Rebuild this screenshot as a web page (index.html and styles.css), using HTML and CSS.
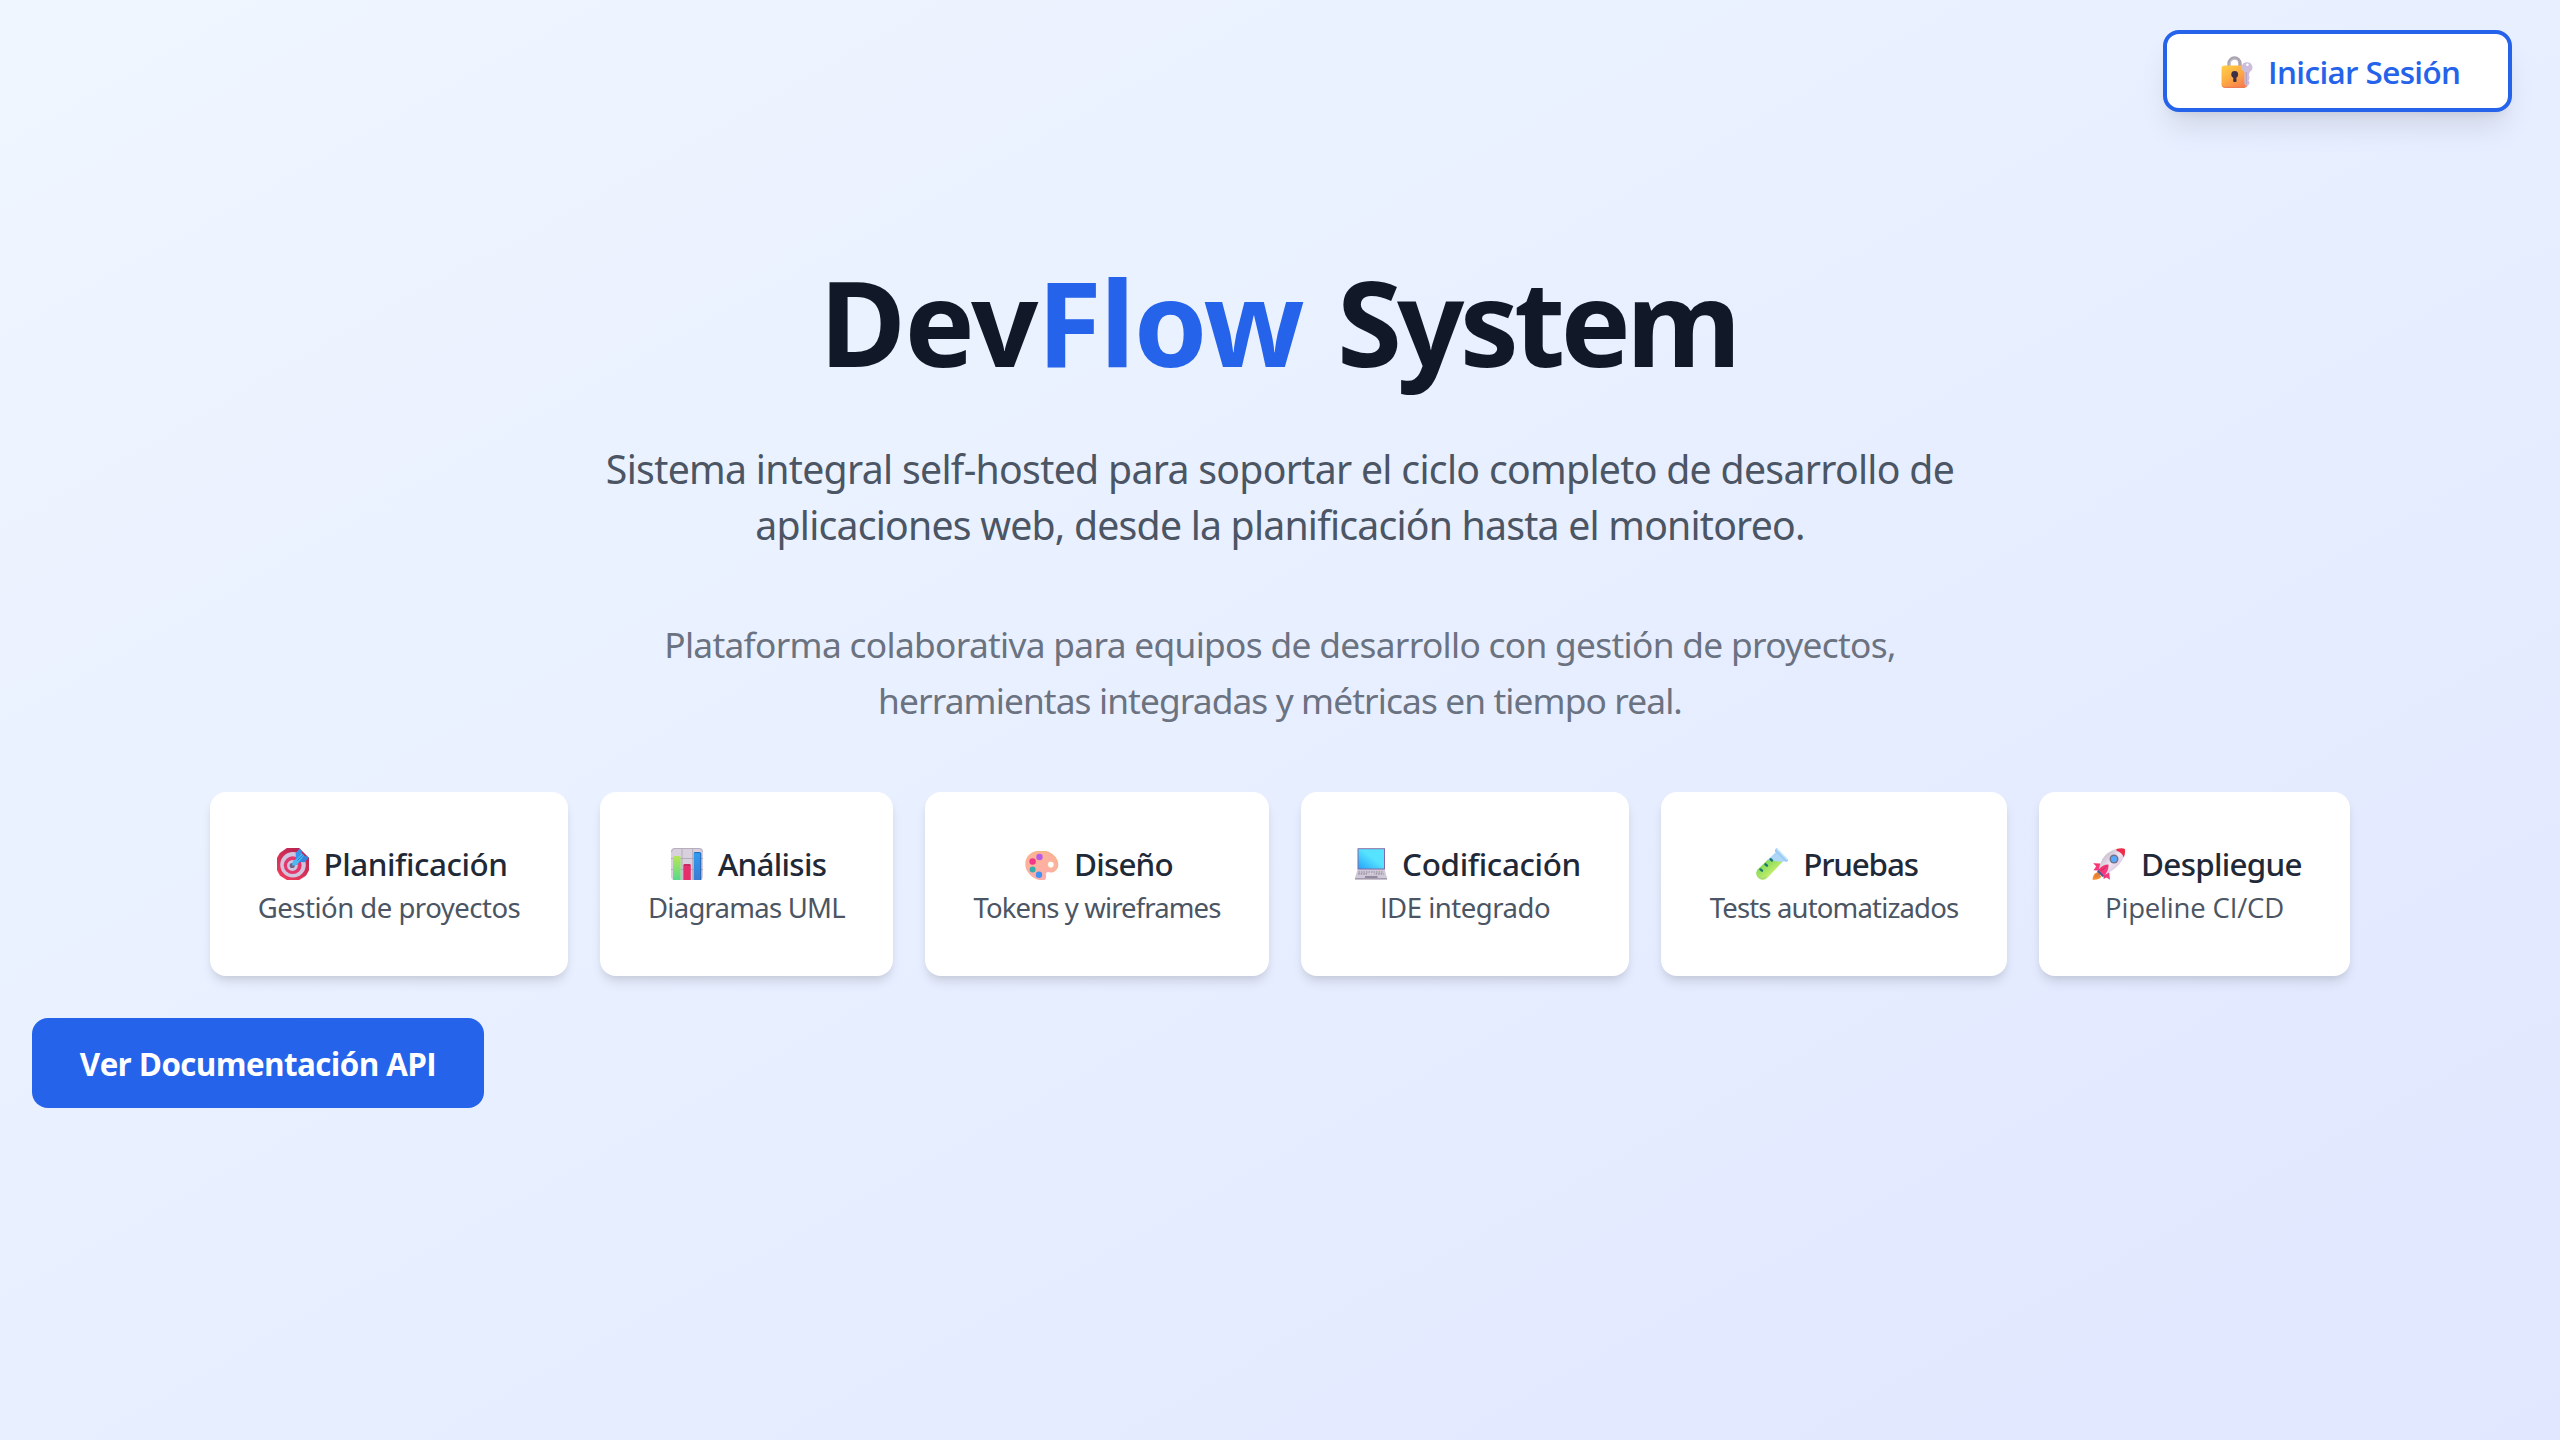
FILE: index.html
```html
<!DOCTYPE html>
<html lang="es">
<head>
<meta charset="utf-8">
<title>DevFlow System</title>
<link rel="stylesheet" href="styles.css">
</head>
<body>
<div class="page">
  <header class="topbar">
    <a class="login">
      <svg class="icon" viewBox="0 0 32 32">
        <defs>
          <linearGradient id="lockBody" x1="0" y1="0" x2=".7" y2="1"><stop offset="0" stop-color="#ffd04a"/><stop offset=".5" stop-color="#fdaf42"/><stop offset="1" stop-color="#f8804e"/></linearGradient>
        </defs>
        <path d="M8 11V7.5a5.5 5.5 0 0 1 11 0V11" fill="none" stroke="#aaa3b0" stroke-width="3.4"/>
        <path d="M9 10V7.5a4.5 4.5 0 0 1 8.5-2" fill="none" stroke="#cfc9d4" stroke-width="1"/>
        <rect x="0.5" y="9.5" width="26" height="22" rx="3" fill="url(#lockBody)"/>
        <path d="M1.5 30.2q1 1.2 2.6 1.2h20" fill="none" stroke="#e8754a" stroke-width="1"/>
        <circle cx="13.7" cy="18.5" r="3.4" fill="#3d3148"/>
        <path d="M12.6 19h2.5l.5 6.2q-1.8 1.8-3.5 0z" fill="#3d3148"/>
        <path d="M26 6.2a5.3 5.3 0 0 0-2.6 10v11.9q1.6 2.3 3.6 1.5l1.4-1.5v-2.6l-1-1.1 1-1.2v-3l-.6-1 .8-3A5.3 5.3 0 0 0 26 6.2z" fill="#cbbddb"/>
        <path d="M25.3 16v12.6" stroke="#b3a2c8" stroke-width="1.2"/>
        <circle cx="26.4" cy="8.7" r="1.3" fill="#fff"/>
      </svg>
      <span class="login-text">Iniciar Sesión</span>
    </a>
  </header>

  <main class="hero">
    <h1 class="title"><span class="dev">Dev</span><span class="flow">Flow</span><span class="system">System</span></h1>
    <p class="lead"><span class="lead-a">Sistema integral self-hosted para soportar el ciclo completo de desarrollo de</span><br><span class="lead-b">aplicaciones web, desde la planificación hasta el monitoreo.</span></p>
    <p class="sublead"><span class="sublead-a">Plataforma colaborativa para equipos de desarrollo con gestión de proyectos,</span><br><span class="sublead-b">herramientas integradas y métricas en tiempo real.</span></p>
  </main>

  <section class="features">
    <article class="card planning">
      <h2>
        <svg class="icon" viewBox="0 0 32 32">
          <defs><linearGradient id="ring" x1=".8" y1="0" x2=".2" y2="1"><stop offset="0" stop-color="#b52350"/><stop offset="1" stop-color="#f03c5c"/></linearGradient></defs>
          <path d="M10 0h12l10 10v12l-3 5.500-7 4.500H10l-7-4.500-3-5.500V10l3-5z" fill="url(#ring)" stroke="url(#ring)" stroke-linejoin="round" stroke-width=".3"/>
          <circle cx="16" cy="16.800" r="12.800" fill="#d1c4df"/>
          <circle cx="15.700" cy="17.200" r="8.900" fill="#e2386b"/>
          <circle cx="15.400" cy="17.500" r="5.400" fill="#d1c4df"/>
          <circle cx="15.200" cy="17.500" r="2.600" fill="#746481"/>
          <path d="M15.500 17.500q-.5-4.500 3.500-6.500L18.600 5 23 .300l2.300 5.200L22 10z" fill="#3796ec"/>
          <path d="M15.500 17.500q5 .500 6.500-3.500l5.500.2L32 9.300l-5.500-2L22 10z" fill="#3187de"/>
          <path d="M15.300 17.500q-.5-5.300 4.200-6.200L25 5.500l2 2-5 6.500q-1.700 3.800-6.700 3.500z" fill="#50b9f2"/>
          <path d="M20.500 12.500l5.800-6" stroke="#2275cf" stroke-width="1"/>
        </svg>
        <span>Planificación</span>
      </h2>
      <p>Gestión de proyectos</p>
    </article>

    <article class="card analysis">
      <h2>
        <svg class="icon" viewBox="0 0 32 32">
          <defs>
            <linearGradient id="barG" x1="0" y1="0" x2="0" y2="1"><stop offset="0" stop-color="#b5e655"/><stop offset="1" stop-color="#58d98b"/></linearGradient>
            <linearGradient id="barB" x1="0" y1="0" x2="0" y2="1"><stop offset="0" stop-color="#2f9df2"/><stop offset="1" stop-color="#3c7bd2"/></linearGradient>
          </defs>
          <rect width="32" height="32" rx="3.500" fill="#d8d1dd"/>
          <path d="M11 0v32M21.700 0v32M0 10.500h32M0 21.500h32" stroke="#b4abba" stroke-width="1"/>
          <path d="M.5 4Q.5.500 4 .500h24q3.500 0 3.500 3.500" fill="none" stroke="#b7aebc" stroke-width="1"/>
          <path d="M2 32V9.500Q2 8 3.500 8H8q1.600 0 1.600 1.500V32z" fill="url(#barG)"/>
          <path d="M12.300 32V17.500q0-1.500 1.500-1.500h4.500q1.500 0 1.500 1.500V32z" fill="#e52e6c"/>
          <path d="M12.800 17h6.500" stroke="#b62762" stroke-width="1.300"/>
          <path d="M22.700 32V5.500q0-1.500 1.500-1.500h4.500q1.500 0 1.500 1.500V32z" fill="url(#barB)"/>
          <path d="M29.700 5v27M23.300 4.600h6" stroke="#2668b4" stroke-width="1"/>
        </svg>
        <span>Análisis</span>
      </h2>
      <p>Diagramas UML</p>
    </article>

    <article class="card design">
      <h2>
        <svg class="icon wide" viewBox="-1 0 34 32">
          <defs><linearGradient id="pal" x1="0" y1="0" x2=".3" y2="1"><stop offset="0" stop-color="#fcb391"/><stop offset="1" stop-color="#fdaeab"/></linearGradient></defs>
          <path d="M11 3h8.500Q28 4.500 31.500 12.500c1.800 4.300.7 8.700-3.500 11.300q-2.800 1.400-5.500.2-2.800-.2-2.500 2.500.9 5.700-3.300 5.900C9 32.500-.5 25.500-.7 16.500-.8 9 4 4 11 3z" fill="url(#pal)"/>
          <path d="M10.500 3.500h9.300c8 2 13 9.500 11.500 15-.7 3-3 5-5.300 5.400" fill="none" stroke="#f4b684" stroke-width="1"/>
          <circle cx="24.800" cy="16.600" r="3.600" fill="#f8c28d"/><circle cx="24.800" cy="16.600" r="2.800" fill="#fff"/>
          <circle cx="13.500" cy="9" r="3.200" fill="#b65be5"/>
          <circle cx="6.600" cy="13.500" r="3.200" fill="#f43786"/>
          <circle cx="6.600" cy="21.500" r="3" fill="#35aeb0"/>
          <circle cx="13" cy="26.700" r="3.200" fill="#4292f4"/>
        </svg>
        <span>Diseño</span>
      </h2>
      <p>Tokens y wireframes</p>
    </article>

    <article class="card coding">
      <h2>
        <svg class="icon" viewBox="0 0 32 32">
          <defs><linearGradient id="scr" x1="1" y1="0" x2="0" y2="1"><stop offset=".45" stop-color="#55e3ff"/><stop offset="1" stop-color="#27a4f8"/></linearGradient></defs>
          <rect x="2.500" y="0" width="27.500" height="22" rx="1" fill="#8069a9"/>
          <rect x="3.500" y="1.200" width="25.500" height="19.300" fill="url(#scr)"/>
          <path d="M3 .5h26.500" stroke="#9b8ab4" stroke-width="1"/>
          <path d="M2.500 21.500h27.200L32 30H0z" fill="#cfc8d7"/>
          <path d="M3.500 24h25M3.200 25.800h25.600" stroke="#8f8698" stroke-width="1.200" stroke-dasharray="1.500 1"/>
          <path d="M12.500 25.900h7" stroke="#e6e0eb" stroke-width="1"/>
          <path d="M10 28h12.500v2H10z" fill="#94899e"/>
          <path d="M0 30h32v1.600H0z" fill="#a59baf"/>
        </svg>
        <span>Codificación</span>
      </h2>
      <p><span class="cap-i">I</span>DE integrado</p>
    </article>

    <article class="card testing">
      <h2>
        <svg class="icon" viewBox="0 0 32 32">
          <defs><linearGradient id="liq" x1="0" y1="0" x2="1" y2="1"><stop offset=".2" stop-color="#7fd65c"/><stop offset=".6" stop-color="#bcec68"/></linearGradient></defs>
          <path d="M12 11.500L1.800 21.300c-2.200 2.500-2.100 5.800.3 8.500 2.700 2.800 6.300 2.700 9 .2L26.800 13.500z" fill="url(#liq)"/>
          <path d="M3 29c2.300 2 5 1.800 7-.2" fill="none" stroke="#9bc99a" stroke-width="1"/>
          <path d="M11.500 12l8.500-8 8.500 9-2 1z" fill="#add6f7"/>
          <path d="M20.500 0l12 12-1.500 1.800h-2L19 3.500V1.500z" fill="#9ccbf5"/>
          <path d="M21 1l10.500 11" stroke="#c6e4fc" stroke-width="1.400"/>
          <path d="M14.500 11.200l1.500 1.300M9.500 16.300l1.500 1.300M4.500 21.400l1.500 1.300" stroke="#19786a" stroke-width="2.400" stroke-linecap="round"/>
        </svg>
        <span>Pruebas</span>
      </h2>
      <p>Tests automatizados</p>
    </article>

    <article class="card deploy">
      <h2>
        <svg class="icon wide" viewBox="0 0 34 32">
          <defs>
            <linearGradient id="hull" x1="0" y1="0" x2="1" y2="1"><stop offset=".2" stop-color="#c5bdc9"/><stop offset=".5" stop-color="#f0e4f2"/><stop offset=".9" stop-color="#cbb3d2"/></linearGradient>
            <linearGradient id="fin" x1="0" y1="0" x2="1" y2="1"><stop offset="0" stop-color="#f72c55"/><stop offset="1" stop-color="#f5429a"/></linearGradient>
          </defs>
          <path d="M5 24.500Q1 25.500.5 31.700q6.500.5 9-3.200z" fill="#f78c31"/>
          <path d="M6 24q-3.500 1.500-3.500 5.500 4 0 6-2.500z" fill="#e0803c"/>
          <path d="M8.500 15.500L1.200 15.200l3 3-2.700 4 6 .5z" fill="url(#fin)"/>
          <path d="M17 22.500l1 9.300-3.500-2.300-3 1.500.5-6z" fill="url(#fin)"/>
          <path d="M5 23.800l6 5.500 1.500-2-5.700-5.600z" fill="#4d5690"/>
          <path d="M7 22C7.500 12 15 2.500 25.500.8q5.500-.5 7.300.5c.7 8-4 17.500-20.800 26z" fill="url(#hull)"/>
          <path d="M24.500 1q6-1.500 8.300 0 .8 4-.9 8.500Q30 4.500 24.500 2.800z" fill="#ef2c48"/>
          <circle cx="22" cy="11" r="4.500" fill="#76718a"/><circle cx="22" cy="11" r="3.100" fill="#55a8fb"/>
          <path d="M6.500 21.700q4.500-5.500 10-5.200.8 5.500-4.500 11.500z" fill="url(#fin)"/>
          <path d="M8.500 22.500q4-1.500 7-5" fill="none" stroke="#c72a6e" stroke-width="1"/>
        </svg>
        <span>Despliegue</span>
      </h2>
      <p>Pipeline CI/CD</p>
    </article>
  </section>

  <div class="actions"><a class="docs">Ver Documentación API</a></div>
</div>
</body>
</html>
```
FILE: styles.css
```css
* { box-sizing: border-box; }

body {
  margin: 0;
  font-family: "Noto Sans", "Open Sans", sans-serif;
}

h1, h2, p { margin: 0; }

.page {
  min-height: 1440px;
  padding: 30px 32px 0;
  background: linear-gradient(to bottom right, #eff6ff, #e0e7ff);
}

.topbar {
  display: flex;
  justify-content: flex-end;
  padding-right: 16px;
}

.login {
  display: flex;
  align-items: center;
  gap: 9px;
  width: 349px;
  height: 82px;
  padding: 2px 0 0 48px;
  border: 4px solid #2563eb;
  border-radius: 16px;
  background: #fff;
  color: #2563eb;
  box-shadow: 0 20px 30px -6px rgba(0, 0, 0, .1), 0 8px 12px -8px rgba(0, 0, 0, .1);
}

.login-text {
  font: 600 31.4px/48px "Open Sans", sans-serif;
  letter-spacing: -.62px;
}

.icon {
  flex: none;
  width: 44px;
  height: 32px;
  padding: 0 6px;
}

.icon.wide { width: 46px; }

.hero { text-align: center; }

.title {
  display: flex;
  justify-content: center;
  margin-top: 150px;
  padding-right: 4px;
  font-size: 118px;
  font-weight: 700;
  line-height: 120px;
  color: #111827;
}

.dev { letter-spacing: -1.5px; }
.flow { letter-spacing: -1.6px; color: #2563eb; }
.system { margin-left: 34px; letter-spacing: -4.8px; }

.lead {
  margin-top: 59px;
  font-size: 39.2px;
  line-height: 56px;
  color: #4b5563;
}

.lead-a { letter-spacing: -.69px; }
.lead-b { letter-spacing: -.78px; }

.sublead {
  margin-top: 63px;
  font-size: 35.3px;
  line-height: 56px;
  color: #6b7280;
}

.sublead-a { letter-spacing: -.685px; }
.sublead-b { letter-spacing: -.89px; }

.features {
  display: flex;
  justify-content: center;
  gap: 32px;
  margin-top: 64px;
}

.card {
  height: 184px;
  padding: 48px 0;
  border-radius: 16px;
  background: #fff;
  text-align: center;
  white-space: nowrap;
  box-shadow: 0 8px 12px -2px rgba(0, 0, 0, .1), 0 4px 8px -4px rgba(0, 0, 0, .1);
}

.card h2 {
  display: flex;
  align-items: center;
  justify-content: center;
  gap: 9px;
  font-size: 31.4px;
  font-weight: 500;
  line-height: 48px;
  color: #1f2937;
}

.card p {
  font-size: 27.5px;
  line-height: 39px;
  color: #4b5563;
}

.cap-i { font-family: "Open Sans", sans-serif; }

.planning { width: 358px; }
.planning h2 { letter-spacing: -.44px; }
.planning p { letter-spacing: -.49px; }

.analysis { width: 293px; }
.analysis h2 { padding-right: 2px; letter-spacing: -.7px; }
.analysis p { letter-spacing: -.75px; }

.design { width: 344px; }
.design h2 { padding-right: 2px; letter-spacing: -.8px; }
.design p { letter-spacing: -.88px; }

.coding { width: 328px; }
.coding h2 { letter-spacing: -.33px; }
.coding p { letter-spacing: -.48px; }

.testing { width: 346px; }
.testing h2 { letter-spacing: -1.2px; }
.testing p { letter-spacing: -.84px; }

.deploy { width: 311px; }
.deploy h2 { padding-right: 1px; letter-spacing: -.7px; }
.deploy p {
  font-family: "Open Sans", sans-serif;
  letter-spacing: -.18px;
}

.actions {
  display: flex;
  margin-top: 42px;
}

.docs {
  width: 452px;
  height: 90px;
  border-radius: 16px;
  background: #2563eb;
  color: #fff;
  font: 700 31.4px/92px "Open Sans", sans-serif;
  letter-spacing: -.61px;
  text-align: center;
}
```
